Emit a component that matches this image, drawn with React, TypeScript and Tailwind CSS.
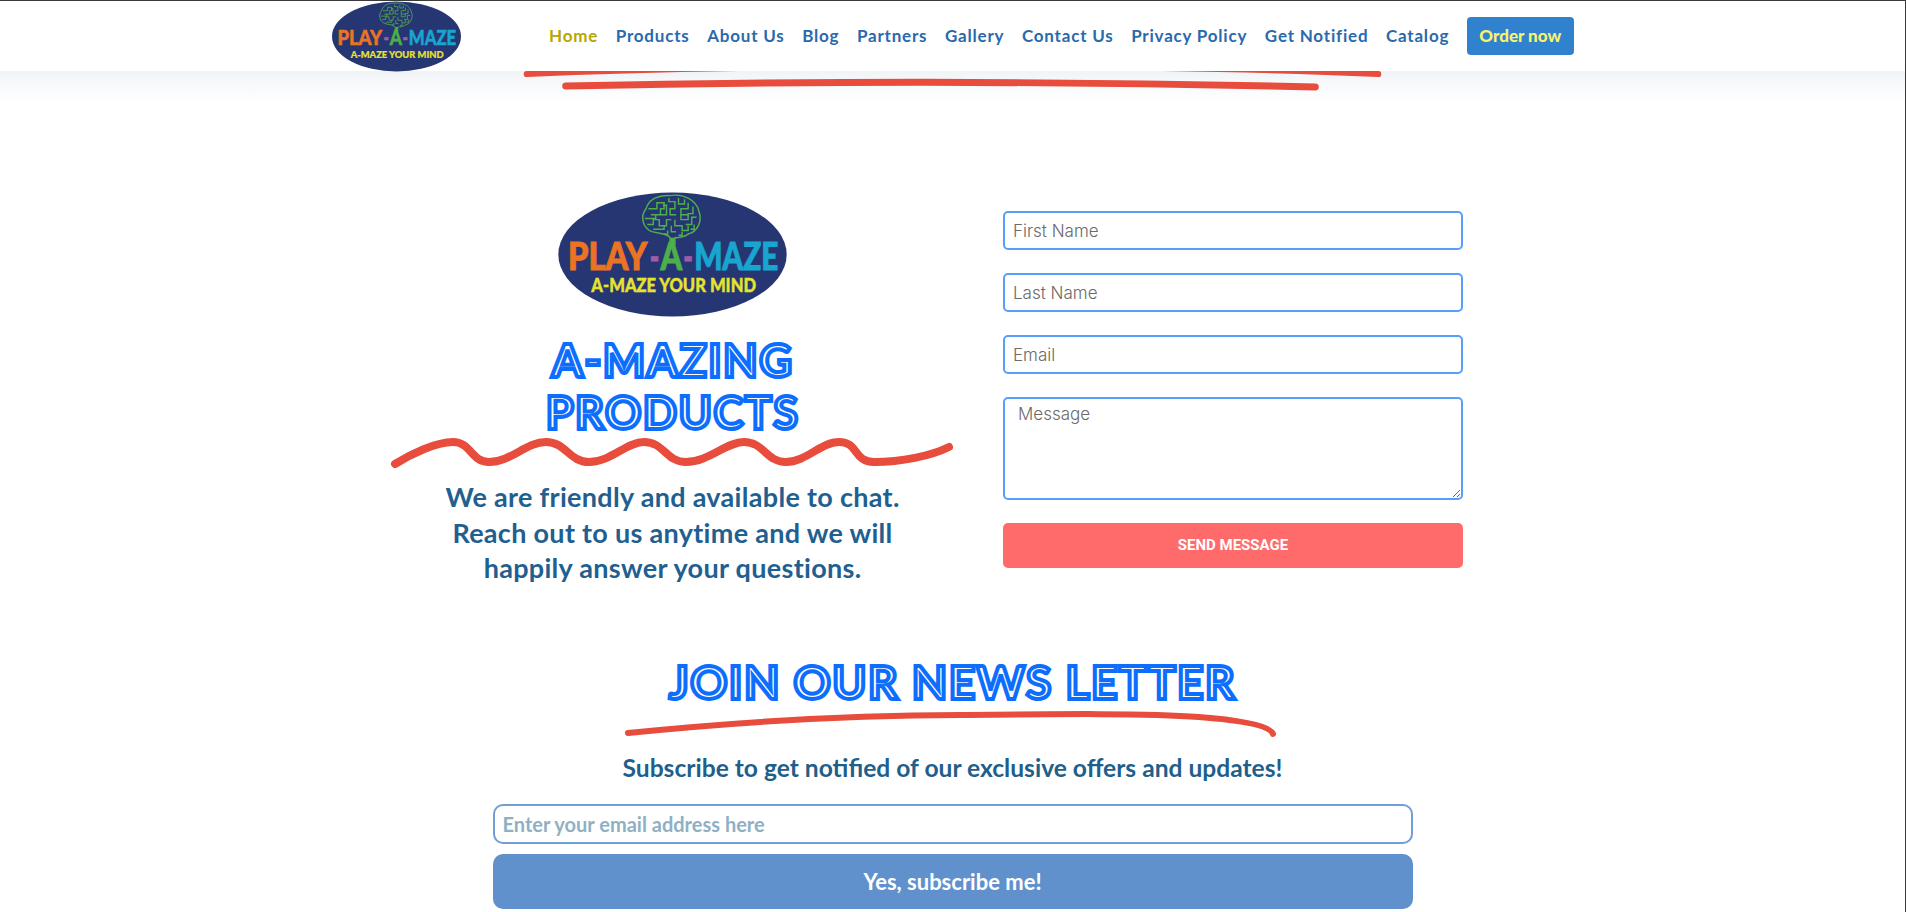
const navLinks = ["Products", "About Us", "Blog", "Partners", "Gallery", "Contact Us", "Privacy Policy", "Get Notified", "Catalog"];

const comic = "font-['Lato',sans-serif]";
const outlined = "font-['Lato',sans-serif] font-bold uppercase text-white [-webkit-text-stroke:4px_#0d6efd]";
const field = "rounded-[5px] border-2 border-[#589efb] font-light placeholder:text-[#6a6a6a]";

const brainLines = [
  "M75 14h7v-5h6v5h-3v5h-8",
  "M72 22h9v-3M85 19h5v-8h-3",
  "M74 27h5v-4h5v5h6v-5h4",
  "M79 31h9v-3M92 5v3h5v6h-4v5h5",
  "M100 5v5h5v-4M108 9v5h-6v5h6",
  "M112 12v6h-4v5h-6v-4M115 21h-4v6h-5",
  "M97 23v5h6v4h5v-4M94 28v5h4",
  "M91 32v3h-3M113 27v4h-3",
  "M103 33v3h-3",
];

const logoWords = [
  { text: "PLAY", x: 8, width: 66, color: "#ea7324" },
  { text: "-", x: 76, width: 8, color: "#a05ca8" },
  { text: "A", x: 85, width: 18, color: "#4caf4a" },
  { text: "-", x: 104, width: 8, color: "#a05ca8" },
  { text: "MAZE", x: 113, width: 70, color: "#18a5cf" },
];

function Logo({ className }: { className: string }) {
  return (
    <svg viewBox="0 0 190 104" className={className}>
      <ellipse cx="95" cy="52" rx="95" ry="51.5" fill="#263673" />
      <g fill="none" stroke="#4fb04a" strokeWidth="1.2">
        <path d="M78 33C70 30 68 20 73 14 75 6 84 2 93 3c11-2 22 4 24 13 3 8-1 17-9 19-4 3-8 3-11 3v6h-4v-6c-3-4-9-3-15-5z" />
        {brainLines.map((line) => (
          <path key={line} d={line} />
        ))}
        <path d="M95 38v8" strokeWidth="3.5" />
      </g>
      {logoWords.map((word) => (
        <text
          key={word.x}
          x={word.x}
          y="65"
          fontFamily="Lato, sans-serif"
          fontWeight="900"
          fontSize="31"
          fill={word.color}
          stroke={word.color}
          strokeWidth="0.8"
          textLength={word.width}
          lengthAdjust="spacingAndGlyphs"
        >
          {word.text}
        </text>
      ))}
      <text x="96" y="83" textAnchor="middle" fontFamily="Lato, sans-serif" fontWeight="900" fontSize="15" fill="#e6e32e" stroke="#e6e32e" strokeWidth="0.3" textLength="137" lengthAdjust="spacingAndGlyphs">
        A-MAZE YOUR MIND
      </text>
    </svg>
  );
}

export default function App() {
  return (
    <div className="h-[912px] overflow-hidden bg-white border-t border-r border-[#3a3a3a]">
      <header className="relative z-10 h-[70px] bg-white">
        <div className="flex h-full items-center pl-[332px]">
          <Logo className="h-[71px] w-[129px] shrink-0" />
          <nav className={`ml-[88px] flex items-center gap-[17.6px] text-[17px] font-bold tracking-[0.8px] text-[#2a69ac] ${comic}`}>
            <a className="text-[#b5a800]">Home</a>
            {navLinks.map((link) => (
              <a key={link}>{link}</a>
            ))}
            <button className="flex h-[38px] w-[107px] items-center justify-center rounded bg-[#3182ce] font-black tracking-normal text-[#f8f36c]">
              Order now
            </button>
          </nav>
        </div>
      </header>

      {/* shadow under the header + tail of the previous section's underline */}
      <div className="relative h-[110px] bg-gradient-to-b from-[#f1f4f7] to-white to-[28%]">
        <svg viewBox="0 0 1906 30" className="h-[30px] w-full">
          <path d="M527 3C750-7 1150-7 1379 3" fill="none" stroke="#e74c3c" strokeWidth="6" strokeLinecap="round" />
          <path d="M566 15c250-5 500-5 750 1" fill="none" stroke="#e74c3c" strokeWidth="7" strokeLinecap="round" />
        </svg>
      </div>

      <section className="ml-[391px] flex w-[1072px] gap-[49px]">
        <div className="flex w-[563px] shrink-0 flex-col items-center pt-[11px]">
          <Logo className="h-[125px] w-[231px]" />
          <h2 className={`mt-[17px] text-center text-[45px] leading-[52px] tracking-[1.5px] ${outlined}`}>
            A-Mazing
            <br />
            Products
          </h2>
          <svg viewBox="0 0 563 30" className="h-[30px] w-full overflow-visible">
            <path d="M4 26C20 16 45 4 62 4 80 4 80 24 98 24 120 24 135 4 155 4 175 4 178 24 198 24 220 24 235 4 253 4 273 4 275 24 295 24 318 24 335 4 353 4 373 4 375 24 395 24 415 24 430 4 448 4 468 4 462 24 483 24 510 24 540 18 558 9" fill="none" stroke="#e74c3c" strokeWidth="8" strokeLinecap="round" />
          </svg>
          <p className={`mt-[11px] w-[480px] text-center text-[27px] font-bold leading-[35.5px] tracking-[0.3px] text-[#1f6090] ${comic}`}>
            We are friendly and available to chat. Reach out to us anytime and we will happily answer your questions.
          </p>
        </div>

        <form className="flex w-[460px] shrink-0 flex-col gap-[23px] pt-[30px] font-['Inter',sans-serif] text-[17px]">
          <input placeholder="First Name" className={`h-[39px] px-2 ${field}`} />
          <input placeholder="Last Name" className={`h-[39px] px-2 ${field}`} />
          <input placeholder="Email" className={`h-[39px] px-2 ${field}`} />
          <textarea placeholder="Message" className={`h-[103px] px-[13px] pt-[3px] ${field}`} />
          <button type="button" className="h-[45px] rounded-[5px] bg-[#ff6b6b] font-['Roboto',sans-serif] text-[15px] font-bold text-white">
            SEND MESSAGE
          </button>
        </form>
      </section>

      <section className="mx-auto mt-[69px] flex w-[920px] flex-col items-center">
        <h2 className={`text-center text-[46px] leading-[54px] tracking-[1.5px] ${outlined}`}>Join Our News Letter</h2>
        <svg viewBox="0 0 650 28" className="h-[28px] w-[650px] overflow-visible">
          <path d="M0 24C110 13 230 6 332 6 430 5 520 4 571 8 610 11 642 16 645 25" fill="none" stroke="#e74c3c" strokeWidth="6" strokeLinecap="round" />
        </svg>
        <p className={`mt-[14px] text-[24.6px] font-bold leading-[34px] text-[#1f5f8b] ${comic}`}>
          Subscribe to get notified of our exclusive offers and updates!
        </p>
        <input
          placeholder="Enter your email address here"
          className={`mt-[19px] h-[40px] w-full rounded-[10px] border-2 border-[#6f9fd3] px-2 text-[20px] font-bold placeholder:text-[#8fb0c4] ${comic}`}
        />
        <button type="button" className={`mt-[10px] h-[55px] w-full rounded-[10px] bg-[#6091cd] text-[22px] font-bold text-white ${comic}`}>
          Yes, subscribe me!
        </button>
      </section>
    </div>
  );
}
